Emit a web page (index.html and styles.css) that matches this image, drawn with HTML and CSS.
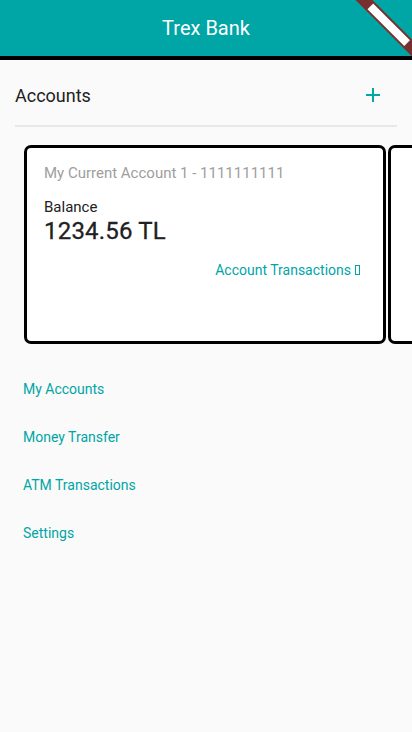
FILE: index.html
```html
<!DOCTYPE html>
<html>
<head>
<meta charset="utf-8">
<link rel="stylesheet" href="styles.css">
</head>
<body>
<div class="app">
  <header class="appbar">
    <h1 class="title">Trex Bank</h1>
  </header>
  <div class="debug-banner"><span class="debug-text"></span></div>
  <section class="accounts-head">
    <h2 class="accounts-title">Accounts</h2>
    <button class="add-btn" aria-label="Add account">
      <svg width="24" height="24" viewBox="0 0 24 24"><path d="M19 13h-6v6h-2v-6H5v-2h6V5h2v6h6v2z" fill="#00A5A6"/></svg>
    </button>
  </section>
  <div class="divider"></div>
  <div class="carousel">
    <div class="card">
      <div class="acc-name">My Current Account 1 - 1111111111</div>
      <div class="balance-label">Balance</div>
      <div class="balance">1234.56 TL</div>
      <div class="tx-row"><span class="tx-link">Account Transactions <span class="tofu"></span></span></div>
    </div>
    <div class="card"></div>
  </div>
  <nav class="menu">
    <a class="menu-item">My Accounts</a>
    <a class="menu-item">Money Transfer</a>
    <a class="menu-item">ATM Transactions</a>
    <a class="menu-item">Settings</a>
  </nav>
</div>
</body>
</html>
```
FILE: styles.css
```css
* { box-sizing: border-box; }
html, body {
  margin: 0;
  padding: 0;
  background: #fafafa;
  font-family: Roboto, "Noto Sans", sans-serif;
}
.app {
  position: relative;
  width: 412px;
  height: 732px;
  overflow: hidden;
  background: #fafafa;
}
.appbar {
  height: 60px;
  background: #00A5A6;
  border-bottom: 4px solid #000;
  display: flex;
  align-items: center;
  justify-content: center;
}
.title {
  margin: 0;
  color: #fff;
  font-size: 20px;
  font-weight: 400;
  line-height: 24px;
}
.debug-banner {
  position: absolute;
  left: 338px;
  top: 18px;
  width: 100px;
  height: 12px;
  background: #7a2f2f;
  transform: rotate(45deg);
  display: flex;
  align-items: center;
  justify-content: center;
}
.debug-text {
  display: block;
  width: 52px;
  height: 8px;
  background: #fff;
  margin-left: 2px;
}
.accounts-head {
  height: 65px;
  padding: 5px 15px 0 15px;
  display: flex;
  align-items: center;
  justify-content: space-between;
}
.accounts-title {
  margin: 0;
  font-size: 18px;
  font-weight: 400;
  color: #212121;
}
.add-btn {
  border: 0;
  background: transparent;
  padding: 0;
  width: 24px;
  height: 24px;
  margin-right: 12px;
  display: flex;
}
.divider {
  margin: 0 15px;
  height: 2px;
  background: #e8e8e8;
}
.carousel {
  display: flex;
  gap: 2px;
  padding-left: 24px;
  margin-top: 18px;
  overflow: hidden;
}
.card {
  flex: 0 0 362px;
  height: 199px;
  border: 3px solid #000;
  border-radius: 7px;
  background: #fff;
  padding: 15px 23px 0 17px;
}
.acc-name {
  font-size: 15px;
  line-height: 20px;
  color: #9e9e9e;
}
.balance-label {
  margin-top: 14px;
  font-size: 15px;
  line-height: 20px;
  color: #212121;
}
.balance {
  font-size: 24px;
  font-weight: 400;
  line-height: 28px;
  color: #212121;
  letter-spacing: 0.2px;
  -webkit-text-stroke: 0.3px #212121;
}
.tx-row {
  display: flex;
  justify-content: flex-end;
  margin-top: 15px;
}
.tx-link {
  font-size: 14px;
  line-height: 20px;
  color: #00A5A6;
  display: inline-flex;
  align-items: center;
  gap: 4px;
}
.tofu {
  display: inline-block;
  width: 5px;
  height: 10px;
  border: 1px solid #00A5A6;
}
.menu {
  display: flex;
  flex-direction: column;
  margin-top: 21px;
  padding-left: 23px;
}
.menu-item {
  height: 48px;
  display: flex;
  align-items: center;
  font-size: 14px;
  color: #00A5A6;
}
```
